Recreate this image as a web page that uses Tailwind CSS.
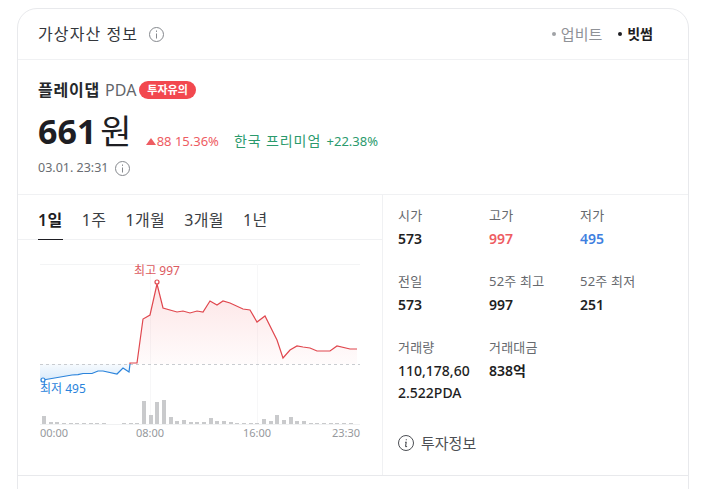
<!DOCTYPE html>
<html lang="ko">
<head>
    <meta charset="UTF-8">
    <title>가상자산 정보</title>
    <script src="https://cdn.jsdelivr.net/npm/@tailwindcss/browser@4"></script>
</head>
<body class="bg-white text-[#1e1e23] font-['Noto_Sans','Noto_Sans_CJK_KR',sans-serif] overflow-hidden">
    <div class="pt-2 pl-[17px] h-[489px] overflow-hidden">
        <div class="w-[672px] h-[500px] border border-[#e8e9ec] rounded-t-[20px]">
            <!-- Header -->
            <div class="h-[51px] flex items-center justify-between pl-5 pr-[35px] border-b border-[#f0f1f3]">
                <div class="flex items-center gap-[11px]">
                    <h2 class="text-base tracking-[1.1px] text-[#33363b]">가상자산 정보</h2>
                    <svg width="15" height="15" viewBox="0 0 15 15" fill="none" stroke="#85888d"><circle cx="7.5" cy="7.5" r="7"/><path d="M7.5 6.5v5M7.5 3.5v1.4"/></svg>
                </div>
                <div class="flex items-center text-[15px]">
                    <span class="flex items-center gap-[5px] text-[#8f9297]"><i class="size-1 rounded-full bg-[#a0a2a6]"></i>업비트</span>
                    <span class="flex items-center gap-[5px] ml-4 font-bold text-sm text-[#1e1e23]"><i class="size-1 rounded-full bg-[#1e1e23]"></i>빗썸</span>
                </div>
            </div>
            <!-- Price -->
            <div class="h-[135px] pl-5 pt-[18px] border-b border-[#f0f1f3]">
                <div class="flex items-center h-[24px]">
                    <strong class="text-base tracking-[0.8px] font-semibold text-[#26282c]">플레이댑</strong>
                    <span class="ml-[5px] text-[#62656a] text-base">PDA</span>
                    <span class="ml-[3px] px-2 h-[18px] flex items-center rounded-full bg-[#f2484f] text-white text-[11px] font-bold">투자유의</span>
                </div>
                <div class="flex items-end mt-[7px] h-[44px]">
                    <span class="text-[34px] leading-[44px] font-bold text-[#1e1e23]">661</span>
                    <span class="ml-1 text-[34px] leading-[44px] text-[#1e1e23]">원</span>
                    <span class="ml-[14px] mb-[2px] flex items-center text-[13px] text-[#ee5c62]">
                        <svg width="10" height="7" viewBox="0 0 10 7" class="mr-px"><path d="M5 0l5 7H0z" fill="#ee5c62"/></svg>88 15.36%
                    </span>
                    <span class="ml-[15px] mb-[2px] text-[13px] text-[#2b9a6d]"><span class="text-sm tracking-[0.9px]">한국 프리미엄</span> <span class="ml-0.5">+22.38%</span></span>
                </div>
                <div class="flex items-center gap-[6px] mt-[6px] text-[12.5px] text-[#6a6d72]">
                    03.01. 23:31
                    <svg width="15" height="15" viewBox="0 0 15 15" fill="none" stroke="#85888d"><circle cx="7.5" cy="7.5" r="7"/><path d="M7.5 6.5v5M7.5 3.5v1.4"/></svg>
                </div>
            </div>
            <div class="flex h-[281px] border-b border-[#e8e9ec]">
                <!-- Chart -->
                <div class="w-[365px] border-r border-[#f0f1f3]">
                    <div class="h-[45px] flex pl-5 gap-[19px] text-base tracking-[0.4px] text-[#3b3e43] border-b border-[#f0f1f3]">
                        <span class="h-[45px] pt-[13px] border-b border-[#1e1e23] font-semibold text-[#1e1e23]">1일</span>
                        <span class="pt-[13px]">1주</span>
                        <span class="pt-[13px]">1개월</span>
                        <span class="pt-[13px]">3개월</span>
                        <span class="pt-[13px]">1년</span>
                    </div>
                    <svg id="chart" width="364" height="205" viewBox="18 240 364 205" class="block font-['Noto_Sans','Noto_Sans_CJK_KR',sans-serif]">
                        <defs>
                            <linearGradient id="redFill" x1="0" y1="0" x2="0" y2="1">
                                <stop offset="0" stop-color="#f2484f" stop-opacity=".15"/>
                                <stop offset="1" stop-color="#f2484f" stop-opacity=".02"/>
                            </linearGradient>
                            <linearGradient id="blueFill" x1="0" y1="0" x2="0" y2="1">
                                <stop offset="0" stop-color="#2f8fe6" stop-opacity=".04"/>
                                <stop offset="1" stop-color="#2f8fe6" stop-opacity=".18"/>
                            </linearGradient>
                        </defs>
                        <path d="M40 264.5H360" stroke="#f3f4f5"/>
                        <path d="M150.5 264V424M257.5 264V424" stroke="#f7f7f8"/>
                        <path d="M130 364V363L137 363 143 319 150 315 157 284 163 308 177 312 183 311 190 313 197 311 203 312 210 301 217 305 223 301 230 303 243 309 250 310 257 322 265 316 277 340 283 358 290 350 297 346 303 347 310 348 317 351 330 351 337 346 350 349 357 349V364Z" fill="url(#redFill)"/>
                        <path d="M43 380 72 375 78 374.7 83 373.5 92 373.5 98 371 103 371 117 374 123 368 129 372 130 364H40V380Z" fill="url(#blueFill)"/>
                        <path d="M40 364.5H360" stroke="#c9ccd0" stroke-dasharray="3 3"/>
                        <path d="M43 380 72 375 78 374.7 83 373.5 92 373.5 98 371 103 371 117 374 123 368 129 372 130 364" fill="none" stroke="#2a83db" stroke-width="1.2"/>
                        <path d="M130 364V363L137 363 143 319 150 315 157 284 163 308 177 312 183 311 190 313 197 311 203 312 210 301 217 305 223 301 230 303 243 309 250 310 257 322 265 316 277 340 283 358 290 350 297 346 303 347 310 348 317 351 330 351 337 346 350 349 357 349" fill="none" stroke="#e0474e" stroke-width="1.2"/>
                        <circle cx="157" cy="282" r="2" fill="#fff" stroke="#e0474e" stroke-width="1.2"/>
                        <circle cx="43" cy="380" r="2" fill="#fff" stroke="#2a83db" stroke-width="1.2"/>
                        <text x="157" y="275" text-anchor="middle" font-size="12" fill="#dc5a60">최고 997</text>
                        <text x="40" y="393" font-size="12" fill="#2a83db">최저 495</text>
                        <g id="bars" fill="#c9cacc"></g>
                        <path d="M40 424.5H360" stroke="#f0f1f2"/>
                        <text x="40" y="437" font-size="11" fill="#96999d">00:00</text>
                        <text x="150" y="437" font-size="11" text-anchor="middle" fill="#96999d">08:00</text>
                        <text x="257" y="437" font-size="11" text-anchor="middle" fill="#96999d">16:00</text>
                        <text x="360" y="437" font-size="11" text-anchor="end" fill="#96999d">23:30</text>
                    </svg>
                </div>
                <!-- Stats -->
                <div class="flex-1 pl-[15px] pt-2">
                    <div class="grid grid-cols-[91px_91px_91px] text-[13px]">
                        <div class="h-[66px]"><p class="h-[25px] leading-[24px] tracking-[0.2px] text-[#66696e]">시가</p><p class="leading-[22px] font-semibold text-sm">573</p></div>
                        <div class="h-[66px]"><p class="h-[25px] leading-[24px] tracking-[0.2px] text-[#66696e]">고가</p><p class="leading-[22px] font-semibold text-sm text-[#ee5c62]">997</p></div>
                        <div class="h-[66px]"><p class="h-[25px] leading-[24px] tracking-[0.2px] text-[#66696e]">저가</p><p class="leading-[22px] font-semibold text-sm text-[#3f7fe0]">495</p></div>
                        <div class="h-[66px]"><p class="h-[25px] leading-[24px] tracking-[0.2px] text-[#66696e]">전일</p><p class="leading-[22px] font-semibold text-sm">573</p></div>
                        <div class="h-[66px]"><p class="h-[25px] leading-[24px] tracking-[0.2px] text-[#66696e]">52주 최고</p><p class="leading-[22px] font-semibold text-sm">997</p></div>
                        <div class="h-[66px]"><p class="h-[25px] leading-[24px] tracking-[0.2px] text-[#66696e]">52주 최저</p><p class="leading-[22px] font-semibold text-sm">251</p></div>
                        <div><p class="h-[25px] leading-[24px] tracking-[0.2px] text-[#66696e]">거래량</p><p class="w-[76px] break-all leading-[22px] font-medium text-sm">110,178,602.522PDA</p></div>
                        <div><p class="h-[25px] leading-[24px] tracking-[0.2px] text-[#66696e]">거래대금</p><p class="leading-[22px] font-semibold text-sm">838억</p></div>
                    </div>
                    <div class="flex items-center gap-[7px] mt-[28px] text-[15px] text-[#4c4f54]">
                        <svg width="16" height="16" viewBox="0 0 16 16" fill="none" stroke="#4c4f54"><circle cx="8" cy="8" r="7.5"/><path d="M8.3 4.2v1.1M7 7.2h1.2L7.6 11c0 .7.6.8 1.4.3" stroke-width="1.1"/></svg>
                        투자정보
                    </div>
                </div>
            </div>
        </div>
    </div>
    <script>
        // Volume bars, one per 30 minutes
        const heights = [8,2,2,1,1,1,1,1,1,1,0,0,1,1,1,23,9,22,24,7,3,4,2,2,2,6,3,3,2,1,1,1,1,5,3,9,4,7,3,3,1,1,1,1,1,1,1,0];
        const bars = document.getElementById('bars');
        heights.forEach((h, i) => {
            const rect = document.createElementNS('http://www.w3.org/2000/svg', 'rect');
            rect.setAttribute('x', Math.round(42 + i * 6.67));
            rect.setAttribute('y', 424 - h);
            rect.setAttribute('width', 4);
            rect.setAttribute('height', h);
            bars.appendChild(rect);
        });
    </script>
</body>
</html>
